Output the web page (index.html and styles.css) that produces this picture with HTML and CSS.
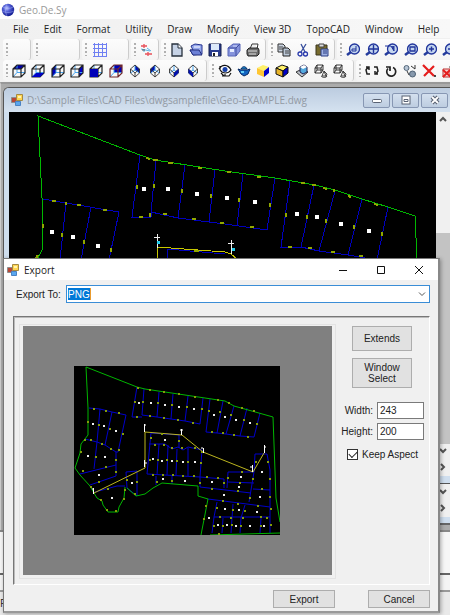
FILE: index.html
```html
<!DOCTYPE html>
<html lang="en">
<head>
<meta charset="utf-8">
<title>Geo.De.Sy</title>
<link rel="stylesheet" href="styles.css">
</head>
<body>
<svg class="defs" aria-hidden="true">
  <defs>
    <radialGradient id="globe" cx="40%" cy="35%" r="65%"><stop offset="0" stop-color="#c5ccff"/><stop offset=".4" stop-color="#5662d8"/><stop offset="1" stop-color="#101a90"/></radialGradient>
    <symbol id="cube" viewBox="0 0 14 14">
      <path d="M5 1v7.500h8M5 8.500L1 13" fill="none" stroke="#49a4ee"/>
      <path d="M1 5l4-4h8v8l-4 4H1zM1 5h8v8M9 5l4-4" fill="none" stroke="currentColor" stroke-width="1.200"/>
    </symbol>
    <symbol id="iso" viewBox="0 0 14 14">
      <path d="M7 1v5M2.500 9L7 6l4.500 3" fill="none" stroke="#49a4ee"/>
      <path d="M7 1l4.500 4v4L7 13 2.500 9V5zM2.500 5L7 9l4.500-4M7 9v4" fill="none" stroke="#333" stroke-width=".9"/>
    </symbol>
    <symbol id="lens" viewBox="0 0 14 14">
      <path d="M5 9L1 12" stroke="#233b9c" stroke-width="2.500"/>
      <circle cx="8.500" cy="6" r="5" fill="#c4d6ef" stroke="#20349b" stroke-width="1.300"/>
    </symbol>
    <symbol id="wire" viewBox="0 0 14 14">
      <path d="M1 4l2-3h6v5L7 9H1zM1 4h6v5M7 4l2-3M3 1v5h6M3 6L1 9" fill="none" stroke="#222" stroke-width=".9"/>
      <path d="M10 7l-2 5h4zM10 7l3 3-1 3M7 12c2 2 5 2 6 0" fill="#eee" stroke="#333" stroke-width=".9"/>
    </symbol>
    <symbol id="form" viewBox="0 0 12 12">
      <path d="M.5 3.500h5v5h-5z" fill="#b94736" stroke="#8e8e8e"/>
      <path d="M5.500.5h6v6h-6z" fill="#ffd551" stroke="#a58a43"/>
      <path d="M4.500 7.500h5v4h-5z" fill="#5aa7ef" stroke="#4b83c4"/>
      <path d="M7 2h3v2H7z" fill="#fff3b0"/>
    </symbol>
  </defs>
</svg>

<div class="app">
  <header class="app-title">
    <svg class="globe" viewBox="0 0 14 14"><circle cx="7" cy="7" r="6.200" fill="url(#globe)"/><path d="M2 4c3 2 7 2 10 0M1 8c4 2 8 2 12 0M6 1c-2 4-2 8 0 12" fill="none" stroke="#a7b3f6" stroke-width=".5"/></svg>
    <span>Geo.De.Sy</span>
  </header>
  <nav class="menu">
    <button>File</button><button>Edit</button><button>Format</button><button>Utility</button><button>Draw</button><button>Modify</button><button>View 3D</button><button>TopoCAD</button><button>Window</button><button>Help</button>
  </nav>

  <div class="toolbars">
    <div class="bar">
      <div class="strip s-empty"></div>
      <div class="strip s-blank"></div>
      <div class="strip s-blank"><button aria-label="Grid"><svg viewBox="0 0 14 14"><path d="M0 1.500h14M0 5.500h14M0 9.500h14M0 13.500h14M1.500 0v14M5.500 0v14M9.500 0v14M13.500 0v14" stroke="#6f80f2"/></svg></button></div>
      <div class="strip s-empty"><button aria-label="Survey"><svg viewBox="0 0 14 14"><path d="M2 3h6M5 1v4M6 11h7M9 9v4" stroke="#e8505a" stroke-width="1.300"/><path d="M2 6l9 2M5 6v3M8 5l4 3" stroke="#5bb4e8"/><path d="M3 7h3" stroke="#555"/></svg></button></div>
      <div class="strip s-file">
        <button aria-label="New"><svg viewBox="0 0 14 14"><path d="M2 1h6l4 4v8H2z" fill="#c6d2e5" stroke="#27303c" stroke-width="1.300"/><path d="M8 1v4h4" fill="#fff" stroke="#27303c"/></svg></button>
        <button aria-label="Open"><svg viewBox="0 0 14 14"><path d="M2 3l4-2 7 1v9l-9 1-3-5h3z" fill="#96a9ed" stroke="#26338f"/><path d="M1 7h9l3 5H4z" fill="#6c80d6" stroke="#222e7d"/><path d="M5 4h6" stroke="#fff"/></svg></button>
        <button aria-label="Save"><svg viewBox="0 0 14 14"><path d="M1 1h12v12H1z" fill="#283b8e" stroke="#17204d"/><path d="M3 1h8v6H3z" fill="#dce9fa"/><path d="M4 9h6v4H4z" fill="#fff"/><path d="M5 10h2v3H5z" fill="#222"/></svg></button>
        <button aria-label="Save all"><svg viewBox="0 0 14 14"><path d="M1 5l5-4h7v7l-4 5H1z" fill="#8593dc" stroke="#5966b8"/><path d="M1 5h8v8M9 5l4-4" fill="none" stroke="#4350a0"/><path d="M3 6h4v3H3z" fill="#e6edff"/><path d="M6 3h4" stroke="#d4dcff"/></svg></button>
        <button aria-label="Print"><svg viewBox="0 0 14 14"><path d="M4 6l2-5h6l-1 5" fill="#fff" stroke="#333"/><path d="M1 7l2-2h9l1 2v4l-2 2H2l-1-2z" fill="#6d6d6d" stroke="#222"/><path d="M2 8h9M3 11h7M6 3h4" stroke="#ddd"/></svg></button>
      </div>
      <div class="strip s-edit">
        <button aria-label="Copy"><svg viewBox="0 0 14 14"><path d="M1 1h5l2 2v6H1z" fill="#ccd5e2" stroke="#333"/><path d="M6 5h5l2 2v6H6z" fill="#bac7d7" stroke="#222"/><path d="M2 4h4M2 6h4M8 8h4M8 10h4" stroke="#444"/></svg></button>
        <button aria-label="Cut"><svg viewBox="0 0 14 14"><path d="M5 1l4 8M10 1L5 9" stroke="#384f9d" stroke-width="1.300"/><circle cx="4" cy="11" r="2" fill="none" stroke="#2738ab" stroke-width="1.300"/><circle cx="9.500" cy="11" r="2" fill="none" stroke="#2738ab" stroke-width="1.300"/></svg></button>
        <button aria-label="Paste"><svg viewBox="0 0 14 14"><path d="M1 2h11v10H1z" fill="#776b2e" stroke="#3b371f"/><path d="M4 1h5v3H4z" fill="#ddd" stroke="#444"/><path d="M6 6h7v7H6z" fill="#9eb1e3" stroke="#2b3c82"/><path d="M8 8h4M8 10h4" stroke="#2b3c82"/></svg></button>
      </div>
      <div class="strip s-zoom">
        <button aria-label="Zoom dynamic"><svg viewBox="0 0 14 14"><use href="#lens"/><path d="M10 3v5H6V6h4" fill="none" stroke="#20349b"/></svg></button>
        <button aria-label="Zoom extents"><svg viewBox="0 0 14 14"><use href="#lens"/><path d="M4 6h9M8.500 2v8" stroke="#20349b" stroke-width="1.400"/></svg></button>
        <button aria-label="Zoom previous"><svg viewBox="0 0 14 14"><use href="#lens"/><path d="M1 3h6l3 5V3" fill="#3146a5" stroke="#20349b"/></svg></button>
        <button aria-label="Zoom window"><svg viewBox="0 0 14 14"><use href="#lens"/><path d="M6 4h5v4H6z" fill="none" stroke="#20349b" stroke-width="1.300"/></svg></button>
        <button aria-label="Zoom in"><svg viewBox="0 0 14 14"><use href="#lens"/><path d="M6 6h5M8.500 3.500v5" stroke="#20349b" stroke-width="1.500"/></svg></button>
        <button aria-label="Zoom out"><svg viewBox="0 0 14 14"><use href="#lens"/><path d="M6 6h5" stroke="#20349b" stroke-width="1.500"/></svg></button>
      </div>
    </div>
    <div class="bar">
      <div class="strip s-view">
        <button aria-label="Top"><svg viewBox="0 0 14 14"><path d="M1 5l4-4h8L9 5z" fill="#0000a8"/><use href="#cube"/></svg></button>
        <button aria-label="Bottom"><svg viewBox="0 0 14 14"><use href="#cube"/><path d="M1 13l4-4h8l-4 4z" fill="#0000c8"/></svg></button>
        <button aria-label="Left"><svg viewBox="0 0 14 14"><path d="M1 5l4-4v8l-4 4z" fill="#0000b8"/><use href="#cube"/></svg></button>
        <button aria-label="Right"><svg viewBox="0 0 14 14"><path d="M9 5l4-4v8l-4 4z" fill="#0000c8"/><use href="#cube"/></svg></button>
        <button aria-label="Front"><svg viewBox="0 0 14 14"><use href="#cube"/><path d="M1 5h8v8H1z" fill="#0000b8"/></svg></button>
        <button class="brown" aria-label="Back"><svg viewBox="0 0 14 14"><path d="M5 1h8v8H5z" fill="#0000b8"/><use href="#cube"/></svg></button>
        <button aria-label="South-west"><svg viewBox="0 0 14 14"><path d="M7 1l4.500 4v4L7 6z" fill="#0010b0"/><use href="#iso"/></svg></button>
        <button aria-label="South-east"><svg viewBox="0 0 14 14"><path d="M7 1L2.500 5v4L7 6z" fill="#0010b0"/><use href="#iso"/></svg></button>
        <button aria-label="North-east"><svg viewBox="0 0 14 14"><use href="#iso"/><path d="M7 9l4.500-4v4L7 13z" fill="#0010b0"/></svg></button>
        <button aria-label="North-west"><svg viewBox="0 0 14 14"><use href="#iso"/><path d="M7 9L2.500 5v4L7 13z" fill="#0010b0"/></svg></button>
      </div>
      <div class="strip s-render">
        <button aria-label="Orbit"><svg viewBox="0 0 14 14"><path d="M1 5c3-5 9-5 12 1-3 4-8 4-11 0M2 2v4M3 9l3 3h5l2-3M4 12h3v-2" fill="#fff" stroke="#111" stroke-width="1.200"/><circle cx="7" cy="5.500" r="2.500" fill="#163fa8"/></svg></button>
        <button aria-label="Shade"><svg viewBox="0 0 14 14"><path d="M1 5l3 1h6l3-1-2 5-4 2-3-2z" fill="#1265c2" stroke="#062863"/><path d="M4 5c1-3 5-3 6 0z" fill="#2196dc" stroke="#062863"/><path d="M4 7h3v2H4z" fill="#63cdf5"/></svg></button>
        <button aria-label="Flat shade"><svg viewBox="0 0 14 14"><path d="M1 4l6-3 6 2-5 4z" fill="#fff16a"/><path d="M1 4l7 3v6l-7-3z" fill="#ffc632"/><path d="M8 7l5-4v6l-5 4z" fill="#0000c8"/></svg></button>
        <button aria-label="Flat shade with edges"><svg viewBox="0 0 14 14"><path d="M1 4l6-3 6 2-5 4z" fill="#fff16a" stroke="#111"/><path d="M1 4l7 3v6l-7-3z" fill="#e8b52b" stroke="#111"/><path d="M8 7l5-4v6l-5 4z" fill="#0000c8" stroke="#111"/></svg></button>
        <button aria-label="Render"><svg viewBox="0 0 14 14"><path d="M1 8l6-3 6 3-6 5z" fill="#bcc2c8" stroke="#333"/><path d="M5 3l4-2 3 2v5L8 10 5 8z" fill="#54aadf" stroke="#225"/><path d="M5 3l3 2 4-2-3-2z" fill="#fff"/></svg></button>
        <button aria-label="Wireframe 2D"><svg><use href="#wire"/></svg></button>
        <button aria-label="Wireframe 3D"><svg><use href="#wire"/></svg></button>
      </div>
      <div class="strip s-undo">
        <button aria-label="Undo"><svg viewBox="0 0 14 14"><path d="M1 3h3v3M3 3L1 6l1 4h3M13 10h-3V7M11 10l2-3-1-4H9" fill="none" stroke="#222" stroke-width="1.500"/></svg></button>
        <button aria-label="Rotate"><svg viewBox="0 0 14 14"><path d="M9 3.500a4.500 4.500 0 1 1-5 1M2 3h4v4" fill="none" stroke="#222" stroke-width="1.700"/></svg></button>
        <button aria-label="Replace"><svg viewBox="0 0 14 14"><circle cx="3.500" cy="4" r="2.500" fill="#b8c6d6" stroke="#536679"/><circle cx="9.500" cy="10" r="3" fill="#8799ad" stroke="#4d6073"/><path d="M8 2l4 3M12 1v4M4 7l2 4" stroke="#333"/></svg></button>
        <button aria-label="Delete"><svg viewBox="0 0 14 14"><path d="M1 1l11 11M12 2L2 12" stroke="#e51d1d" stroke-width="2.200"/><path d="M12 12h2" stroke="#111" stroke-width="1.500"/></svg></button>
        <button aria-label="Purge"><svg viewBox="0 0 14 14"><path d="M2 5h7v8H2z" fill="#f6d6d6" stroke="#b33"/><path d="M2 6l8 7M9 6l-7 7" stroke="#e51d1d" stroke-width="2"/><path d="M8 3h5" stroke="#555"/></svg></button>
      </div>
    </div>
  </div>

  <main class="desktop">
    <section class="child">
      <div class="child-title">
        <svg class="form-icon"><use href="#form"/></svg>
        <span class="child-name">D:\Sample Files\CAD Files\dwgsamplefile\Geo-EXAMPLE.dwg</span>
        <button aria-label="Minimize"><svg viewBox="0 0 12 10"><rect x="1.500" y="4.500" width="9" height="3" rx="1" fill="#fff" stroke="#596273"/></svg></button>
        <button aria-label="Maximize"><svg viewBox="0 0 12 10"><rect x="2" y="1" width="8" height="8" fill="#fff" stroke="#596273"/><path d="M4 4.500h4v2H4z" fill="#fff" stroke="#596273"/></svg></button>
        <button aria-label="Close"><svg viewBox="0 0 12 10"><path d="M3 2l6 6M9 2L3 8" stroke="#596273" stroke-width="4"/><path d="M3 2l6 6M9 2L3 8" stroke="#fff" stroke-width="1.800"/></svg></button>
      </div>
      <div class="view">
        <div class="canvas">
          <svg class="site" viewBox="9 112 426 148" width="426" height="148" shape-rendering="crispEdges" fill="none">
            <path stroke="#0000bd" d="M43 199L66 203 119 212 109 260M66 203L60 260M91 207L81 260M140 155L132 217H151M156 161L151 212 178 218 209 222 225 224 267 230 275 178M151 212v5M185 165L178 218M215 170L209 222M243 174L237 226M290 181L281 247H301L319 251 348 255 377 260M314 185L301 247M335 191L319 251M362 199L348 255M388 207L377 260M167 260V249L225 254"/>
            <path stroke="#00b800" d="M37 260L42 250V198L38 116 140 155 155 160 225 171 275 178 315 185 335 190 362 199 388 207 415 216 417 260"/>
            <path stroke="#c8c800" d="M157 260V247L225 252 231 254 238 260"/>
            <path stroke="#91a800" stroke-width="2" d="M146 158l4 1M168 163h5M198 168h4M227 172h4M257 177h4M301 183h4M323 188l4 1M348 196l3 1M374 204l4 1M153 160h5M312 185h4M334 189v3M137 185v4M154 184v4M182 189v4M211 194v4M239 198v4M270 203v4M286 213v4M307 215v4M326 219v4M354 225v4M382 232v4M139 217h4M150 213v4M163 214h4M192 219h4M220 223h4M250 227h4M288 247h4M308 248h4M331 252h4M359 256h4M52 201h4M77 205h4M103 210h4M66 202v3M43 224v4M62 233v4M84 240v4M111 248v4M38 255l-2 3M194 251h5"/>
            <path stroke="#fff" stroke-width="4" d="M142 189h4M166 189h4M195 194h4M225 198h4M253 202h4M295 214h4M315 217h4M339 224h4M367 231h4M50 232h4M71 237h4M96 246h4"/>
            <path stroke="#eee" d="M154 237h6M157 234v14M228 243h6M231 240v14"/>
            <path stroke="#24ceed" stroke-width="3" d="M157 242h3M232 249h3"/>
          </svg>
        </div>
        <div class="vscroll"><svg viewBox="0 0 14 14"><path d="M4 9l3-3 3 3" fill="none" stroke="#555" stroke-width="2"/></svg><span class="thumb"></span><svg viewBox="0 0 14 14"><path d="M4 5l3 3 3-3" fill="none" stroke="#555" stroke-width="2"/></svg></div>
      </div>
      <div class="hscroll"><svg viewBox="0 0 14 14"><path d="M5 4l3 3-3 3" fill="none" stroke="#555" stroke-width="2"/></svg></div>
    </section>
    <div class="child-tail">
      <svg viewBox="0 0 14 14"><path d="M4 5l3 3 3-3" fill="none" stroke="#555" stroke-width="2"/></svg>
      <svg viewBox="0 0 14 14"><path d="M5 4l3 3-3 3" fill="none" stroke="#555" stroke-width="2"/></svg>
    </div>
    <div class="command"></div>
    <div class="command-line"></div>
    <footer class="status">R</footer>
  </main>
</div>

<form class="dialog" role="dialog" aria-label="Export" onsubmit="return false">
  <div class="dialog-title">
    <svg class="form-icon"><use href="#form"/></svg>
    <span class="dialog-name">Export</span>
    <button type="button" aria-label="Minimize"><svg viewBox="0 0 10 10"><path d="M1 5.500h8" stroke="#111"/></svg></button>
    <button type="button" aria-label="Maximize"><svg viewBox="0 0 10 10"><path d="M1.500 1.500h7v7h-7z" fill="none" stroke="#111"/></svg></button>
    <button type="button" aria-label="Close"><svg viewBox="0 0 10 10"><path d="M1 1l8 8M9 1L1 9" stroke="#111"/></svg></button>
  </div>
  <div class="dialog-body">
    <div class="export-to">
      <label for="format">Export To:</label>
      <div class="combo">
        <select id="format"><option>PNG</option></select>
        <svg viewBox="0 0 10 10"><path d="M2 3.500l3 3 3-3" fill="none" stroke="#555"/></svg>
      </div>
    </div>
    <div class="panel">
      <div class="preview">
        <div class="preview-area">
          <svg class="plan" viewBox="74 366 206 169" width="206" height="169" fill="none">
            <path stroke="#0000ca" d="M89 408L100 409 112 412 126 415 118 452M85 439L97 442 105 445 116 452 118 452M100 409L97 442 94 469M112 412L105 445M116 452V476L90 485M80 474L116 465M95 492L117 486H125M127 488L126 472 137 471V496L127 488M137 387L132 417H142M144 389L142 415 157 417 171 419 185 421 200 424 203 398M159 392L157 417M173 394L171 419M188 396L185 421M210 399L206 432 217 433 226 434 240 436 254 437 260 413M223 401L217 433M234 406L226 434M247 408L240 436M151 433L147 474 200 477 202 450 188 447 183 450 178 447 172 449 165 444H149M151 433L179 435V448M159 444L157 475M168 445L167 475M177 449L176 475M188 448V476M156 476V485M172 476V484M200 477L224 479V488M200 477V487L251 493M228 472H254L249 502M228 472L227 488M228 482L254 483M254 472L255 454H267L270 470V533M253 489L270 490M208 499L270 507M217 502L214 517 212 533M214 517H270M233 504L232 518 231 533M245 505L241 518 240 533M223 518L222 533M261 518L260 533"/>
            <path stroke="#00b500" d="M86 367L88 408V435L81 444 80 453 75 468 80 475 90 486 94 493 97 498 102 501 103 505 108 512H118L119 507 124 498 125 487M127 488L136 496 145 494 153 488 162 483 198 486V496L208 499 201 535M210 535L280 533M86 367L137 387 145 389 185 395 225 401 234 406 273 417 276 498 280 522"/>
            <path stroke="#bcb51f" d="M94 493L145 468V432L182 435 203 452 253 472 264 453"/>
            <path stroke="#849c08" stroke-width="2" d="M93 409h2M105 411h2M118 413h2M87 422h2M98 425h2M109 429h2M122 434h2M90 440h2M101 444h2M110 449h2M118 450h2M84 440h2M80 452h2M95 457h2M115 460h2M105 467h2M82 471h2M115 472h2M98 482h2M90 487h2M107 489h2M124 490h2M123 499h2M106 510h2M115 511h2M100 500h2M126 480h2M136 482h2M134 494h2M137 388h2M149 390h2M163 392h2M178 394h2M194 397h2M134 402h2M142 402h2M157 403h2M171 405h2M186 407h2M201 409h2M136 417h2M149 416h2M163 418h2M177 420h2M192 423h2M208 411h2M219 412h2M230 415h2M243 420h2M256 424h2M217 400h2M228 403h2M241 408h2M253 411h2M211 432h2M222 433h2M233 435h2M247 437h2M150 438h2M161 434h2M178 441h2M154 445h2M163 445h2M171 448h2M181 448h2M194 448h2M201 452h2M149 460h2M157 460h2M166 460h2M176 461h2M187 462h2M200 463h2M152 475h2M162 475h2M172 475h2M182 476h2M193 476h2M206 477h2M217 478h2M156 482h2M171 481h2M199 483h2M211 489h2M223 483h2M227 478h2M241 472h2M252 479h2M239 483h2M237 491h2M249 498h2M261 489h2M269 479h2M267 462h2M255 462h2M269 497h2M270 509h2M216 508h2M232 510h2M244 511h2M257 506h2M222 501h2M237 504h2M205 506h2M203 519h2M213 526h2M222 526h2M231 525h2M240 526h2M260 526h2M270 525h2M219 517h2M230 518h2M242 518h2M260 517h2M266 518h2M218 534h2"/>
            <path stroke="#eee" stroke-width="2" d="M92 424h2M103 426h2M115 431h2M87 456h2M104 457h2M98 475h2M111 498h2M131 483h2M138 403h2M150 403h2M164 405h2M178 407h2M193 409h2M213 415h2M224 417h2M235 420h2M249 423h2M164 440h2M152 459h2M161 461h2M171 461h2M182 462h2M194 462h2M162 479h2M184 481h2M211 482h2M240 477h2M238 487h2M223 495h2M261 472h2M259 497h2M224 509h2M238 510h2M256 512h2M208 518h2M217 525h2M226 525h2M235 526h2M249 526h2M263 526h2"/>
            <path stroke="#fff" d="M144.500 424v8M144 425h2M181.500 429v6M180 430h3M144.500 460v7M144 463h3M93.500 488v6M92 489h2M203.500 448v5M201 448h2M252.500 465v7M250 467h3M264.500 445v8M264 447h2"/>
          </svg>
        </div>
      </div>
      <div class="options">
        <button type="button" class="btn extends">Extends</button>
        <button type="button" class="btn window-select">Window Select</button>
        <div class="sizes">
          <label for="w">Width:</label><input id="w" type="text" value="243">
          <label for="h">Height:</label><input id="h" type="text" value="200">
        </div>
        <label class="keep"><input type="checkbox" checked>Keep Aspect</label>
      </div>
    </div>
    <div class="actions">
      <button type="submit" class="btn">Export</button>
      <button type="button" class="btn">Cancel</button>
    </div>
  </div>
</form>
</body>
</html>
```
FILE: styles.css
```css
* { box-sizing: border-box; }
body { margin: 0; font: 10px/12px "Open Sans", "Noto Sans", sans-serif; color: #222; background: #f0f0f0; overflow: hidden; }
button { font: inherit; color: inherit; background: none; border: 0; padding: 0; margin: 0; white-space: nowrap; }
svg { display: block; flex: none; }
.defs { position: absolute; width: 0; height: 0; }

.app { display: flex; flex-direction: column; min-height: 100vh; }
.app-title { display: flex; align-items: center; gap: 4px; height: 19px; padding-left: 1px; background: #fff; color: #999; }
.globe { width: 14px; height: 14px; }
.menu { display: flex; gap: 15px; height: 19px; padding-left: 13px; background: linear-gradient(90deg, #f0f0f0, #f8f8f8); }

.toolbars { background: #f0f0f0; padding: 1px 0 1px 3px; overflow: hidden; }
.bar { display: flex; gap: 2px; height: 21px; }
.strip { display: flex; flex: none; align-items: center; padding: 0 3px; background: linear-gradient(#fcfcfc, #f4f4f4); border-right: 1px solid #ccc; border-radius: 3px; }
.strip::before { content: ""; width: 2px; height: 13px; margin-right: 1px; background: repeating-linear-gradient(#b0b0b0 0 2px, transparent 2px 4px); }
.strip button { flex: 1; display: flex; justify-content: center; }
.strip button svg { width: 14px; height: 14px; }
.strip .brown { color: #70282d; }
.s-empty { width: 28px; }
.s-blank { width: 47px; }
.s-blank button { flex: none; width: 24px; }
.s-file { width: 105px; }
.s-edit { width: 67px; }
.s-zoom { width: 126px; }
.s-view { width: 204px; }
.s-render { width: 145px; }
.s-undo { width: 105px; }

.desktop { display: flex; flex: 1; flex-direction: column; padding: 3px 0 0 2px; background: #ababab; border-top: 2px solid #989898; border-left: 1px solid #ccc; }
.child { display: flex; flex-direction: column; height: 397px; padding-left: 5px; background: #cfdeee; border: 1px solid #555; border-right: 0; border-radius: 6px 0 0 0; overflow: hidden; }
.child-title { display: flex; align-items: center; gap: 2px; height: 24px; margin-left: -5px; padding: 0 2px 0 7px; background: linear-gradient(#bccce0, #d5e2f0); color: #9299a3; }
.form-icon { width: 12px; height: 12px; }
.child-name { flex: 1; margin-left: 2px; white-space: nowrap; }
.child-title button { display: grid; place-items: center; width: 27px; height: 15px; border: 1px solid #8797b3; border-radius: 2px; background: linear-gradient(#d4e0ef, #bdcde0); }
.child-title button svg { width: 12px; height: 10px; }
.view { display: flex; flex: 1; min-height: 0; }
.canvas { flex: 1; background: #000; overflow: hidden; }
.vscroll { display: flex; flex-direction: column; width: 14px; background: #f0f0f0; }
.vscroll svg { width: 14px; height: 14px; }
.thumb { flex: 1; margin-top: 107px; background: #c3c3c3; }
.hscroll { display: flex; justify-content: flex-end; align-items: center; height: 25px; background: #f0f0f0; border-bottom: 7px solid #cfdeee; }
.hscroll svg, .child-tail svg { width: 14px; height: 14px; }
.child-tail { display: flex; flex-direction: column; align-items: flex-end; gap: 2px; height: 41px; padding-top: 1px; background: #f0f0f0; border-bottom: 2px solid #666; box-shadow: inset 0 -6px #cfdeee; }
.command { height: 45px; margin: 5px 0 0 -3px; background: #f6f6f6; border-top: 2px solid #888; border-bottom: 2px solid #666; }
.command-line { height: 17px; margin-left: -3px; background: #f4f4f4; border-bottom: 2px solid #999; }
.status { flex: 1; margin-left: -3px; padding-top: 4px; background: #e9e9e9; line-height: 14px; }

.dialog { position: absolute; top: 258px; left: 3px; right: 10px; background: #f0f0f0; border: 1px solid #777; border-right: 2px solid #888; border-bottom: 2px solid #999; box-shadow: 1px 1px 4px #0005; font: 10px/11px "Liberation Sans", sans-serif; color: #222; }
.dialog-title { display: flex; align-items: center; height: 21px; padding-left: 3px; background: #fff; font: 10px/14px "Open Sans", sans-serif; }
.dialog-name { flex: 1; margin-left: 5px; }
.dialog-title button { display: grid; place-items: center; width: 38px; height: 20px; }
.dialog-title button svg { width: 10px; height: 10px; }
.dialog-body { padding: 5px 8px 3px 9px; }
.export-to { display: grid; grid-template-columns: 53px 1fr; align-items: center; }
.export-to label { padding-left: 3px; white-space: nowrap; }
.combo { display: grid; align-items: center; }
.combo select, .combo svg { grid-area: 1 / 1; }
.combo select { appearance: none; width: 100%; height: 18px; padding: 0 1px; border: 1px solid #3a8dd6; border-radius: 0; font: inherit; color: #fff; background: linear-gradient(#0078d7, #0078d7) 1px 2px / 22px 12px no-repeat, linear-gradient(#e99b2e, #e99b2e) 23px 2px / 1px 12px no-repeat, #fff; }
.combo svg { width: 10px; height: 10px; margin-right: 3px; justify-self: end; pointer-events: none; }
.panel { display: flex; margin-top: 13px; padding: 7px 5px 5px; border: 1px solid; border-color: #777 #fff #fff #777; box-shadow: inset 1px 1px #bbb; }
.preview { flex: 1; min-width: 0; padding: 1px 3px 3px; border: 1px solid #e3e3e3; }
.preview-area { height: 249px; padding: 40px 51px; background: #808080; overflow: hidden; }
.plan { background: #000; }
.options { display: flex; flex-direction: column; width: 88px; padding: 2px 0 0 11px; }
.btn { border: 1px solid #adadad; background: #e1e1e1; text-align: center; }
.options .btn { width: 60px; margin-left: 5px; }
.extends { height: 25px; }
.window-select { height: 30px; margin-top: 7px; padding: 0 8px; white-space: normal; }
.sizes { display: grid; grid-template-columns: 1fr 47px; gap: 4px; align-items: center; margin: 14px 0 0 -12px; text-align: right; }
.sizes input { width: 47px; height: 17px; padding: 0 2px; border: 1px solid #7a7a7a; font: inherit; color: inherit; background: #fff; }
.keep { display: flex; align-items: center; gap: 4px; margin: 9px 0 0 0; white-space: nowrap; }
.keep input { appearance: none; width: 11px; height: 11px; margin: 0; border: 1px solid #333; background: #fff; display: grid; place-items: center; }
.keep input:checked::before { content: ""; width: 7px; height: 4px; border: solid #222; border-width: 0 0 1px 1px; transform: translateY(-1px) rotate(-45deg); }
.actions { display: flex; justify-content: flex-end; gap: 33px; margin-top: 5px; }
.actions .btn { width: 62px; height: 18px; }
```
